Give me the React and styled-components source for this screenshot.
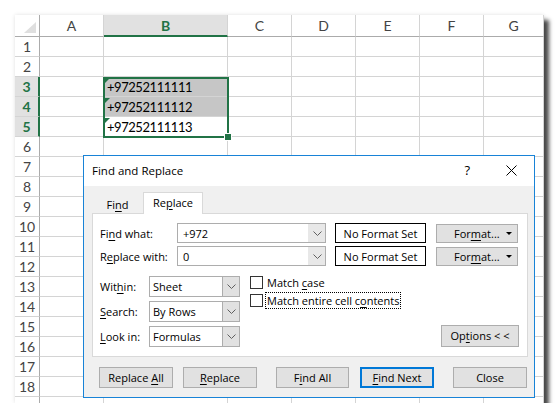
import React from 'react';
import styled, { createGlobalStyle } from 'styled-components';

const GlobalStyle = createGlobalStyle`
	body {
		margin: 0;
		background: #ffffff;
	}
`;

const UI_FONT = `"Open Sans", "Noto Sans", sans-serif`;
const SHEET_FONT = `Lato, "Open Sans", sans-serif`;
const GREEN = '#217346';

const Page = styled.div`
	padding: 15px 0 0 15px;
`;

const Sheet = styled.div`
	position: relative;
	width: 529px;
	height: 388px;
	overflow: hidden;
	background: #ffffff;
	box-shadow: 5px 5px 4px rgba(0, 0, 0, 0.7), 0 0 4px rgba(0, 0, 0, 0.12);
`;

const Grid = styled.div`
	display: grid;
	grid-template-columns: 25px 64px 124px 64px 64px 64px 64px 60px;
	grid-template-rows: 22px;
	grid-auto-rows: 20px;
	font-family: ${SHEET_FONT};
`;

const Corner = styled.div`
	position: relative;
	box-sizing: border-box;
	border-right: 1px solid #ababab;
	border-bottom: 1px solid #ababab;
	background: #ffffff;

	&::after {
		content: '';
		position: absolute;
		right: 3px;
		bottom: 3px;
		border-left: 12px solid transparent;
		border-bottom: 11px solid #dfdfdf;
	}
`;

const ColHeader = styled.div`
	box-sizing: border-box;
	display: flex;
	align-items: center;
	justify-content: center;
	font-size: 14px;
	color: ${(p) => (p.$active ? GREEN : '#444444')};
	font-weight: ${(p) => (p.$active ? 700 : 400)};
	background: ${(p) => (p.$active ? '#e1e1e1' : '#ffffff')};
	border-right: 1px solid #d4d4d4;
	border-bottom: ${(p) => (p.$active ? `2px solid ${GREEN}` : '1px solid #ababab')};
`;

const RowHeader = styled.div`
	box-sizing: border-box;
	display: flex;
	align-items: center;
	justify-content: center;
	font-size: 14px;
	color: ${(p) => (p.$active ? GREEN : '#444444')};
	font-weight: ${(p) => (p.$active ? 700 : 400)};
	background: ${(p) => (p.$active ? '#e1e1e1' : '#ffffff')};
	border-bottom: 1px solid #d4d4d4;
	border-right: ${(p) => (p.$active ? `2px solid ${GREEN}` : '1px solid #ababab')};
`;

const Cell = styled.div`
	position: relative;
	box-sizing: border-box;
	display: flex;
	align-items: flex-end;
	padding: 0 0 1px 3px;
	font-size: 13px;
	letter-spacing: -0.45px;
	color: #000000;
	background: ${(p) => (p.$fill ? '#c6c6c6' : '#ffffff')};
	border-right: 1px solid #d4d4d4;
	border-bottom: 1px solid #d4d4d4;

	${(p) =>
		p.$flag &&
		`
		&::before {
			content: '';
			position: absolute;
			left: 1px;
			top: 1px;
			border-top: 5px solid ${GREEN};
			border-right: 5px solid transparent;
		}
	`}
`;

const Selection = styled.div`
	position: absolute;
	left: 88px;
	top: 62px;
	width: 126px;
	height: 61px;
	box-sizing: border-box;
	border: 2px solid ${GREEN};
	pointer-events: none;
`;

const FillHandle = styled.div`
	position: absolute;
	right: -5px;
	bottom: -5px;
	width: 6px;
	height: 6px;
	background: ${GREEN};
	border: 1px solid #ffffff;
`;

const Dialog = styled.div`
	position: absolute;
	left: 68px;
	top: 140px;
	width: 452px;
	height: 243px;
	box-sizing: border-box;
	border: 1px solid #1883d7;
	background: #f0f0f0;
	font-family: ${UI_FONT};
	font-size: 11px;
	color: #000000;
	display: flex;
	flex-direction: column;
`;

const TitleBar = styled.div`
	height: 30px;
	display: flex;
	align-items: center;
	background: #ffffff;
	padding: 0 0 2px 8px;
	box-sizing: border-box;
`;

const Title = styled.div`
	flex: 1;
	font-size: 11.5px;
`;

const Help = styled.div`
	font-size: 13px;
	margin-right: 36px;
`;

const CloseBox = styled.div`
	display: flex;
	margin-right: 17px;
`;

const Body = styled.div`
	padding: 6px 6px 0 8px;
`;

const Tabs = styled.div`
	display: flex;
	align-items: flex-end;
	height: 21px;
`;

const Tab = styled.div`
	box-sizing: border-box;
	width: ${(p) => p.$w}px;
	height: ${(p) => (p.$active ? 22 : 19)}px;
	margin-bottom: ${(p) => (p.$active ? -1 : 0)}px;
	display: flex;
	align-items: center;
	justify-content: center;
	background: ${(p) => (p.$active ? '#ffffff' : 'transparent')};
	border: 1px solid ${(p) => (p.$active ? '#d9d9d9' : 'transparent')};
	border-bottom: none;
	position: relative;
	z-index: 1;
	padding-bottom: ${(p) => (p.$active ? 2 : 0)}px;
`;

const Panel = styled.div`
	box-sizing: border-box;
	height: 144px;
	background: #ffffff;
	border: 1px solid #d9d9d9;
	padding: 9px 8px 9px 7px;
	display: flex;
	flex-direction: column;
`;

const FieldRow = styled.div`
	display: flex;
	align-items: center;
	height: 20px;
	margin-bottom: 3px;
`;

const Label = styled.div`
	width: ${(p) => p.$w}px;
	flex-shrink: 0;
`;

const Combo = styled.div`
	box-sizing: border-box;
	width: ${(p) => p.$w}px;
	height: ${(p) => p.$h}px;
	display: flex;
	align-items: stretch;
	background: #ffffff;
	border: 1px solid #adadad;
`;

const ComboText = styled.div`
	flex: 1;
	display: flex;
	align-items: center;
	padding-left: ${(p) => p.$pad}px;
`;

const ComboArrow = styled.div`
	width: 16px;
	display: flex;
	align-items: center;
	justify-content: center;
	background: ${(p) => (p.$boxed ? '#e1e1e1' : '#e8e8e8')};
	border-left: 1px solid ${(p) => (p.$boxed ? '#adadad' : '#e8e8e8')};
`;

const FormatBox = styled.div`
	box-sizing: border-box;
	width: 91px;
	height: 20px;
	margin-left: 9px;
	display: flex;
	align-items: center;
	justify-content: center;
	border: 1px solid #000000;
`;

const FormatButton = styled.div`
	box-sizing: border-box;
	width: 82px;
	height: 19px;
	margin-left: 10px;
	display: flex;
	align-items: center;
	padding: 0 5px 0 17px;
	background: #e1e1e1;
	border: 1px solid #adadad;

	svg {
		margin-left: auto;
	}
`;

const Lower = styled.div`
	display: flex;
	margin-top: 7px;
`;

const SelectCol = styled.div`
	display: flex;
	flex-direction: column;
	gap: 4px;
`;

const SelectRow = styled.div`
	display: flex;
	align-items: center;
`;

const CheckCol = styled.div`
	display: flex;
	flex-direction: column;
	gap: 3px;
	margin-left: 10px;
`;

const CheckRow = styled.div`
	display: flex;
	align-items: center;
	height: ${(p) => p.$h}px;
`;

const CheckBox = styled.div`
	box-sizing: border-box;
	width: 13px;
	height: 13px;
	background: #ffffff;
	border: 1px solid #333333;
`;

const CheckLabel = styled.div`
	margin-left: 2px;
	padding: 0 1px;
	line-height: 15px;
	border: 1px dotted ${(p) => (p.$focus ? '#000000' : 'transparent')};
`;

const OptionsButton = styled.div`
	box-sizing: border-box;
	margin-left: auto;
	align-self: flex-end;
	width: 78px;
	height: 22px;
	line-height: 20px;
	text-align: center;
	background: #e1e1e1;
	border: 1px solid #adadad;
`;

const ButtonRow = styled.div`
	display: flex;
	margin-top: 10px;
	padding-left: 7px;
`;

const Button = styled.div`
	box-sizing: border-box;
	width: ${(p) => p.$w || 74}px;
	height: 21px;
	margin-left: ${(p) => p.$gap || 0}px;
	text-align: center;
	line-height: ${(p) => (p.$primary ? 17 : 19)}px;
	background: #e1e1e1;
	border: ${(p) => (p.$primary ? '2px solid #0078d7' : '1px solid #adadad')};
`;

const Key = styled.u`
	text-decoration-thickness: 1px;
	text-underline-offset: 2px;
`;

const Chevron = () => (
	<svg width="9" height="5" viewBox="0 0 9 5">
		<polyline points="0.5,0.5 4.5,4.5 8.5,0.5" fill="none" stroke="#606060" strokeWidth="1" />
	</svg>
);

const Caret = () => (
	<svg width="6" height="3" viewBox="0 0 6 3">
		<polygon points="0,0 6,0 3,3" fill="#000000" />
	</svg>
);

const CloseIcon = () => (
	<svg width="11" height="11" viewBox="0 0 11 11">
		<path d="M0.5 0.5 L10.5 10.5 M10.5 0.5 L0.5 10.5" stroke="#000000" strokeWidth="1" />
	</svg>
);

const columns = ['A', 'B', 'C', 'D', 'E', 'F', 'G'];
const values = { 3: '+97252111111', 4: '+97252111112', 5: '+97252111113' };
// 18 numbered rows, plus a sliver of the next one at the bottom edge
const rows = Array.from({ length: 19 }, (_, i) => i + 1);

function Spreadsheet() {
	return (
		<Grid>
			<Corner />
			{columns.map((c) => (
				<ColHeader key={c} $active={c === 'B'}>
					{c}
				</ColHeader>
			))}
			{rows.map((r) => (
				<React.Fragment key={r}>
					<RowHeader $active={r >= 3 && r <= 5}>{r <= 18 ? r : ''}</RowHeader>
					{columns.map((c) =>
						c === 'B' && values[r] ? (
							<Cell key={c} $fill={r !== 5} $flag>
								{values[r]}
							</Cell>
						) : (
							<Cell key={c} />
						)
					)}
				</React.Fragment>
			))}
		</Grid>
	);
}

function ComboField({ width, height, pad, boxed, children }) {
	return (
		<Combo $w={width} $h={height}>
			<ComboText $pad={pad}>{children}</ComboText>
			<ComboArrow $boxed={boxed}>
				<Chevron />
			</ComboArrow>
		</Combo>
	);
}

function FindReplaceDialog() {
	return (
		<Dialog>
			<TitleBar>
				<Title>Find and Replace</Title>
				<Help>?</Help>
				<CloseBox>
					<CloseIcon />
				</CloseBox>
			</TitleBar>
			<Body>
				<Tabs>
					<Tab $w={51}>
						<span>
							Fi<Key>n</Key>d
						</span>
					</Tab>
					<Tab $w={60} $active>
						<span>
							Re<Key>p</Key>lace
						</span>
					</Tab>
				</Tabs>
				<Panel>
					<FieldRow>
						<Label $w={77}>
							Fi<Key>n</Key>d what:
						</Label>
						<ComboField width={149} height={20} pad={5}>
							+972
						</ComboField>
						<FormatBox>No Format Set</FormatBox>
						<FormatButton>
							<span>
								For<Key>m</Key>at...
							</span>
							<Caret />
						</FormatButton>
					</FieldRow>
					<FieldRow>
						<Label $w={77}>
							R<Key>e</Key>place with:
						</Label>
						<ComboField width={149} height={20} pad={5}>
							0
						</ComboField>
						<FormatBox>No Format Set</FormatBox>
						<FormatButton>
							<span>
								For<Key>m</Key>at...
							</span>
							<Caret />
						</FormatButton>
					</FieldRow>
					<Lower>
						<SelectCol>
							<SelectRow>
								<Label $w={49}>
									Wit<Key>h</Key>in:
								</Label>
								<ComboField width={91} height={21} pad={3} boxed>
									Sheet
								</ComboField>
							</SelectRow>
							<SelectRow>
								<Label $w={49}>
									<Key>S</Key>earch:
								</Label>
								<ComboField width={91} height={21} pad={3} boxed>
									By Rows
								</ComboField>
							</SelectRow>
							<SelectRow>
								<Label $w={49}>
									<Key>L</Key>ook in:
								</Label>
								<ComboField width={91} height={21} pad={3} boxed>
									Formulas
								</ComboField>
							</SelectRow>
						</SelectCol>
						<CheckCol>
							<CheckRow $h={13}>
								<CheckBox />
								<CheckLabel>
									Match <Key>c</Key>ase
								</CheckLabel>
							</CheckRow>
							<CheckRow $h={17}>
								<CheckBox />
								<CheckLabel $focus>
									Match entire cell c<Key>o</Key>ntents
								</CheckLabel>
							</CheckRow>
						</CheckCol>
						<OptionsButton>
							Op<Key>t</Key>ions &lt; &lt;
						</OptionsButton>
					</Lower>
				</Panel>
				<ButtonRow>
					<Button>
						Replace <Key>A</Key>ll
					</Button>
					<Button $gap={10}>
						<Key>R</Key>eplace
					</Button>
					<Button $gap={19} $w={73}>
						F<Key>i</Key>nd All
					</Button>
					<Button $gap={11} $primary>
						<Key>F</Key>ind Next
					</Button>
					<Button $gap={19}>Close</Button>
				</ButtonRow>
			</Body>
		</Dialog>
	);
}

export default function App() {
	return (
		<Page>
			<GlobalStyle />
			<Sheet>
				<Spreadsheet />
				<Selection>
					<FillHandle />
				</Selection>
				<FindReplaceDialog />
			</Sheet>
		</Page>
	);
}
